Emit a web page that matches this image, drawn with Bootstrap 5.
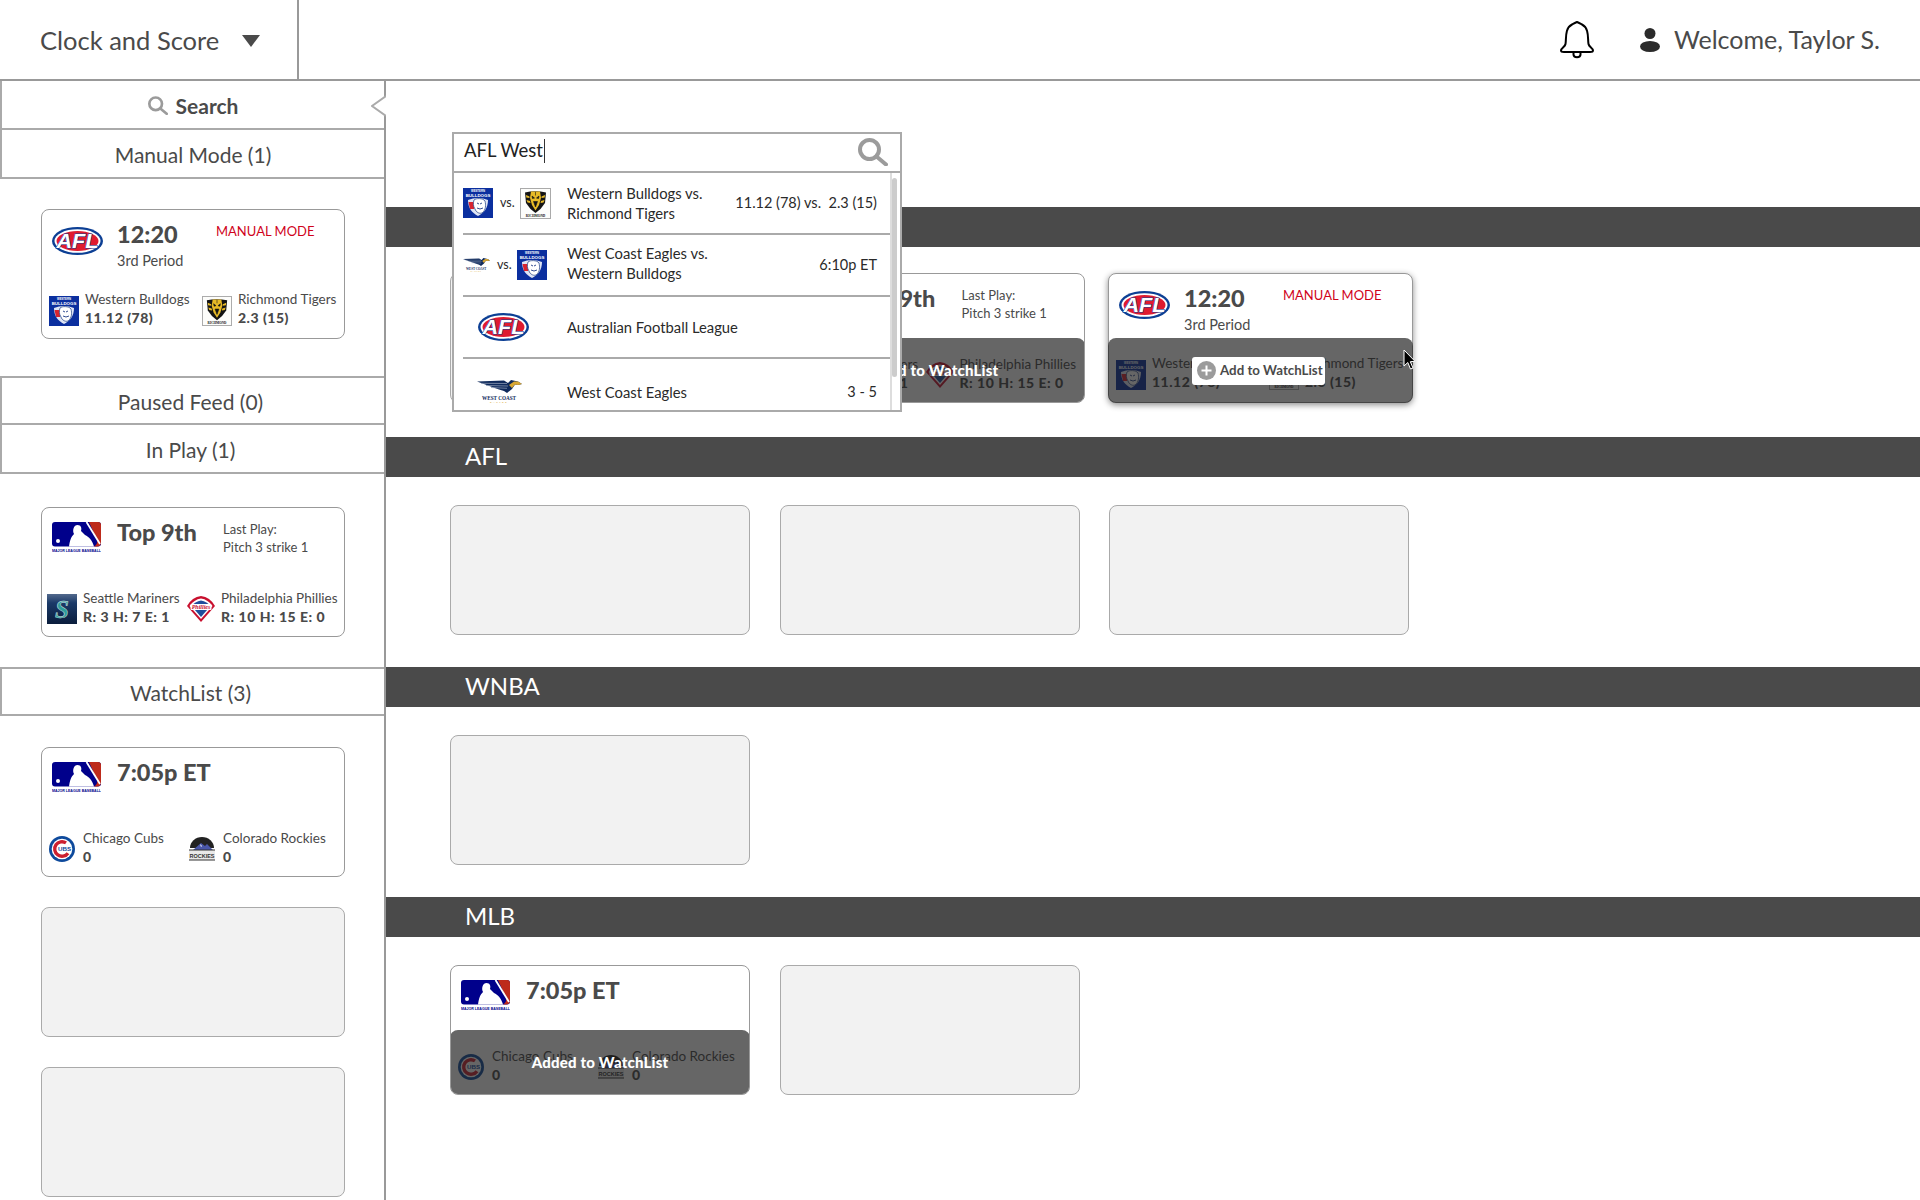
<!DOCTYPE html>
<html lang="en">
<head>
  <meta charset="UTF-8" />
  <meta name="viewport" content="width=device-width, initial-scale=1.0" />
  <title>Clock and Score</title>
  <link href="https://cdn.jsdelivr.net/npm/bootstrap@5.3.0/dist/css/bootstrap.min.css" rel="stylesheet">
  <style>
    body {
      font-family: "Lato", "Noto Sans", sans-serif;
      color: #4a4a4a;
      background: #fff;
      width: 1920px;
      height: 1200px;
      overflow: hidden;
    }
    .sprite { position: absolute; width: 0; height: 0; }

    /* top bar */
    .topbar { height: 81px; border-bottom: 2px solid #999; }
    .mode-picker { width: 299px; border-right: 2px solid #999; padding: 2px 0 0 40px; font-size: 25.5px; }
    .mode-picker .caret { margin-left: 23px; margin-top: 1px; }
    .welcome { font-size: 25px; padding: 1px 40px 0 0; }
    .welcome .bell { margin: 0 45px 3px 0; }
    .welcome .person { margin-right: 14px; }

    /* left column */
    .page { height: 1119px; }
    .sidebar { width: 386px; border-right: 2px solid #999; flex: none; }
    .side-head { height: 49px; border: solid #aaa; border-width: 0 0 2px 2px; font-size: 21px; padding-top: 2px; }
    .side-head.top-line { border-top-width: 2px; }
    .side-head.shifted { padding-right: 5px; }
    .side-group { padding: 30px 0 30px 41px; }
    .group-manual { padding-bottom: 37px; }
    .group-play { padding-top: 33px; }
    .group-watch { padding-top: 31px; display: flex; flex-direction: column; gap: 30px; }
    .collapse-tip { position: absolute; right: -2px; top: 14px; }

    /* game cards */
    .game-card.card { width: 304px; height: 130px; border: 1px solid #999; border-radius: 8px; color: #4a4a4a; overflow: hidden; }
    .game-card.wide { width: 300px; }
    .game-card.over-wide { width: 305px; margin-right: -5px; }
    .game-card.hovered { width: 305px; margin-left: -1px; overflow: visible; box-shadow: 0 2px 6px rgba(0, 0, 0, .45); }
    .game-card.blank { background: #f2f2f2; border-color: #aaa; }
    .card-top { display: flex; padding: 14px 0 0 10px; height: 86px; flex: none; }
    .card-top .league { width: 51px; flex: none; }
    .card-top .league.afl { padding-top: 3px; }
    .clock { width: 99px; margin: -4px 0 0 14px; flex: none; }
    .clock.long { width: 106px; }
    .clock b { display: block; font-size: 23.5px; line-height: 28px; font-weight: 900; white-space: nowrap; }
    .clock span { display: block; font-size: 14.5px; line-height: 20px; margin-top: 3px; }
    .manual { color: #d0021b; font-size: 13px; line-height: 20px; margin-top: -3px; }
    .last-play { font-size: 13px; line-height: 18px; margin-top: -2px; white-space: nowrap; }
    .teams { display: flex; padding-left: 7px; height: 30px; }
    .teams.sea { padding-left: 5px; }
    .team { display: flex; align-items: center; gap: 6px; white-space: nowrap; flex: none; }
    .afl-row .team:first-child { width: 153px; }
    .sea .team:first-child, .chi .team:first-child { width: 140px; }
    .chi .team { gap: 8px; }
    .team div { font-size: 13.5px; line-height: 18px; margin-top: -3px; }
    .afl-row .team div { margin-top: -6px; }
    .team b { display: block; font-weight: 900; font-size: 14px; letter-spacing: .5px; line-height: 19px; }
    .dim {
      position: absolute; left: -1px; right: -1px; bottom: -1px; height: 65px;
      background: rgba(30, 30, 30, .68);
      border-radius: 8px;
      color: #fff; font-size: 15px; font-weight: 900; letter-spacing: .2px;
    }
    .add-btn.btn {
      --bs-btn-padding-x: 5px; --bs-btn-padding-y: 0;
      height: 28px; width: 133px; background: #fff; border: 0; border-radius: 3px;
      color: #4a4a4a; font-size: 13.300px; font-weight: 700; letter-spacing: 0; margin-right: 4px;
    }
    .pointer { position: absolute; right: -4px; top: 75px; }

    /* main column */
    .section-bar { height: 40px; background: #4a4a4a; color: #fff; font-size: 24px; padding: 0 0 3px 79px; }
    .card-row { display: flex; gap: 29.5px; padding: 28px 0 32px 64px; }
    .card-row.first { padding: 26px 0 34px 64px; }
    .board { padding-top: 126px; }

    /* search dropdown */
    .search-pop {
      position: absolute; left: 452px; top: 132px; width: 450px; height: 280px;
      background: #fff; border: 2px solid #aaa; overflow: hidden; z-index: 5;
    }
    .search-box { height: 39px; border-bottom: 2px solid #aaa; padding: 0 12px 3px 10px; color: #222; font-size: 18.5px; }
    .search-box .caret-bar { width: 1px; height: 24px; background: #333; margin-left: 1px; }
    .search-box svg { margin-top: 2px; }
    .search-pop .list-group { --bs-list-group-border-color: #aaa; --bs-list-group-border-width: 2px; margin: 0 8px 0 9px; border-right: 2px solid #ddd; border-radius: 0; }
    .result { height: 62px; display: flex; align-items: center; }
    .result.list-group-item { padding: 0 13px 0 0; background: transparent; color: #2a2a2a; font-size: 14.8px; line-height: 20px; }
    .result.tight-up .names { margin-top: -4px; }
    .result .scoreline { font-size: 14.5px; }
    .result .logos { width: 104px; flex: none; display: flex; align-items: center; }
    .result .logos small { font-size: 12.5px; margin: 0 5px 0 7px; }
    .result .logos.solo { padding-left: 15px; }
    .result.last { padding-top: 3px; }
    .result.last .logos.solo { padding-left: 14px; }
    .scroll-thumb { position: absolute; right: 3px; top: 44px; width: 5px; height: 199px; background: #ccc; border-radius: 3px; }
  </style>
</head>
<body>

  <!-- gradient has to stay in the document, logos get stamped out below -->
  <svg class="sprite" xmlns="http://www.w3.org/2000/svg">
    <defs>
      <linearGradient id="marinersBg" x1="0" y1="0" x2="0" y2="1">
        <stop offset="0" stop-color="#52698c"/>
        <stop offset=".3" stop-color="#1b3a68"/>
        <stop offset="1" stop-color="#0a1d3c"/>
      </linearGradient>
    </defs>
  </svg>

  <template id="logos">
    <svg xmlns="http://www.w3.org/2000/svg">
      <symbol id="logo-afl" viewBox="0 0 51 28">
        <ellipse cx="25.500" cy="14" rx="25.500" ry="14" fill="#0c3f94"/>
        <ellipse cx="25.500" cy="14" rx="23" ry="11.800" fill="#fff"/>
        <ellipse cx="25.500" cy="14" rx="21" ry="10" fill="#df1b2f"/>
        <text x="25.500" y="20.500" text-anchor="middle" font-family="Liberation Sans, sans-serif" font-size="20" font-weight="700" font-style="italic" fill="#fff" stroke="#0c3f94" stroke-width="1" paint-order="stroke" textLength="42" lengthAdjust="spacingAndGlyphs">AFL</text>
      </symbol>
      <symbol id="logo-mlb" viewBox="0 0 49 30">
        <rect width="49" height="24.500" rx="3" fill="#00008b"/>
        <path d="M37 0H46Q49 0 49 3V20Q49 24.500 45 24.500H42Q46 22 45 18Z" fill="#bd2b1b"/>
        <path d="M34.500 0L48 22" stroke="#fff" stroke-width="1.800"/>
        <path d="M17 24.500C18 18 19 15 22 12C20 8 22 3 25.500 3C29 3 30 6 29 9L33 13C37 15 40 18 42 24.500Z" fill="#fff"/>
        <circle cx="6" cy="19" r="2" fill="#fff"/>
        <text x="0" y="29.500" font-family="Liberation Sans, sans-serif" font-size="3.700" font-weight="700" fill="#00008b" textLength="49" lengthAdjust="spacingAndGlyphs">MAJOR LEAGUE BASEBALL</text>
      </symbol>
      <symbol id="logo-bulldogs" viewBox="0 0 30 30">
        <rect width="30" height="30" fill="#0b2f9f"/>
        <text x="15" y="3.800" text-anchor="middle" font-family="Liberation Sans, sans-serif" font-size="2.800" font-weight="700" fill="#fff">WESTERN</text>
        <text x="15" y="8.500" text-anchor="middle" font-family="Liberation Sans, sans-serif" font-size="4.400" font-weight="700" fill="#fff">BULLDOGS</text>
        <path d="M5 12Q15 8 25 12C25 20 21 25 15 28C9 25 5 20 5 12Z" fill="#dfe5f5"/>
        <path d="M5.500 14H11V21H7Z" fill="#d8242f"/>
        <path d="M11 12C13 10 20 10 22 13C23 17 23 22 19 25C16 26 13 24 12 21C10 18 10 15 11 12Z" fill="#fff" stroke="#33508f" stroke-width=".8"/>
        <path d="M14 15l2 1M19 15l-2 1M14 20q3 2 6 0" stroke="#1d3a86" stroke-width=".9" fill="none"/>
      </symbol>
      <symbol id="logo-tigers" viewBox="0 0 31 31">
        <rect x=".5" y=".5" width="30" height="30" fill="#fdfdfb" stroke="#aaa"/>
        <path d="M5 4.500Q15 2 26 4.500L25 15Q21.500 21 15.500 25Q9.500 21 6 15Z" fill="#141414"/>
        <path d="M6 7L9.500 8.500V10L6.300 9.500ZM6.500 12L10 13L10.500 15L7.500 14.500ZM25 7L21.500 8.500V10L24.700 9.500ZM24.500 12L21 13L20.500 15L23.500 14.500Z" fill="#e7ba27"/>
        <path d="M11 3.500H20L21 10L19 17L15.500 22.500L12 17L10 10Z" fill="#e7ba27"/>
        <path d="M12 8L14.500 10L12.500 10.500ZM19 8L16.500 10L18.500 10.500ZM13.500 13.500H17.500L15.500 19ZM15.500 4V7.500" fill="#141414" stroke="#141414" stroke-width=".6"/>
        <text x="15.500" y="28.800" text-anchor="middle" font-family="Liberation Serif, serif" font-size="3.400" font-weight="700" fill="#111">RICHMOND</text>
      </symbol>
      <symbol id="logo-wce" viewBox="0 0 45 23">
        <path d="M0 1.500L27 .5L31 3L34 0L41 1.500L45 4L41 5L38 4.500L35 9L30 13L27 11L22 9.500Z" fill="#0f2a5c"/>
        <path d="M37 1.500L41 1.500L45 4L41 5L38 4.500L35 8L32 5Z" fill="#d9a732"/>
        <path d="M4 3.300L30 3.500M9 5.500L31 6M14 7.500L30 8.300" stroke="#8a98b3" stroke-width=".8"/>
        <text x="22" y="19.500" text-anchor="middle" font-family="Liberation Serif, serif" font-size="5.600" font-weight="700" fill="#0f2a5c" textLength="34" lengthAdjust="spacingAndGlyphs">WEST COAST</text>
        <text x="22" y="22.800" text-anchor="middle" font-family="Liberation Sans, sans-serif" font-size="2.400" fill="#d9a732" letter-spacing="1.400">EAGLES</text>
      </symbol>
      <symbol id="logo-mariners" viewBox="0 0 30 30">
        <rect width="30" height="30" fill="url(#marinersBg)"/>
        <text x="15" y="24" text-anchor="middle" font-family="Liberation Serif, serif" font-size="25" font-weight="700" font-style="italic" fill="#2f9d9b" stroke="#d9e4e4" stroke-width=".5">S</text>
      </symbol>
      <symbol id="logo-phillies" viewBox="0 0 28 26">
        <path d="M14 0Q23 1 28 10L14 26L0 10Q5 1 14 0Z" fill="#c8102e"/>
        <path d="M14 2.500Q21 3.500 25.500 10L14 23L2.500 10Q7 3.500 14 2.500Z" fill="#fff"/>
        <path d="M14 4.500Q20 5.500 23.500 10L14 21L4.500 10Q8 5.500 14 4.500Z" fill="#1f4e9c"/>
        <rect x="3.500" y="8" width="21" height="6" rx="1" fill="#fff"/>
        <text x="14" y="12.800" text-anchor="middle" font-family="Liberation Serif, serif" font-size="6" font-weight="700" font-style="italic" fill="#c8102e">Phillies</text>
      </symbol>
      <symbol id="logo-cubs" viewBox="0 0 26 26">
        <circle cx="13" cy="13" r="13" fill="#0e4a9c"/>
        <circle cx="13" cy="13" r="10.300" fill="#fff"/>
        <circle cx="13" cy="13" r="7.300" fill="none" stroke="#cc2030" stroke-width="3.400" stroke-dasharray="34 12" transform="rotate(35 13 13)"/>
        <text x="15.500" y="15.300" text-anchor="middle" font-family="Liberation Sans, sans-serif" font-size="6.200" font-weight="700" fill="#0e4a9c">UBS</text>
      </symbol>
      <symbol id="logo-rockies" viewBox="0 0 26 25">
        <path d="M1 11A12 11 0 0 1 25 11" fill="#222"/>
        <path d="M4 13L12 6L16 9L18 7L24 13Z" fill="#4a57a8"/>
        <path d="M11 7L13 9L12 10Z" fill="#fff"/>
        <rect x="0" y="13" width="26" height="10" fill="#e9e9e9"/>
        <path d="M0 13H26M0 23H26" stroke="#333" stroke-width="1"/>
        <text x="13" y="20.500" text-anchor="middle" font-family="Liberation Sans, sans-serif" font-size="5.400" font-weight="700" fill="#333" textLength="25" lengthAdjust="spacingAndGlyphs">ROCKIES</text>
      </symbol>
      <symbol id="icon-search" viewBox="0 0 30 28">
        <circle cx="11.500" cy="11.500" r="9.500" fill="none" stroke="#9b9b9b" stroke-width="4"/>
        <path d="M18.500 18.500L28 26.500" stroke="#9b9b9b" stroke-width="4" stroke-linecap="round"/>
      </symbol>
    </svg>
  </template>

  <header class="topbar d-flex">
    <div class="mode-picker d-flex align-items-center">
      <span>Clock and Score</span>
      <svg class="caret" width="18" height="12" viewBox="0 0 18 12"><path d="M0 0H18L9 12Z" fill="#4a4a4a"/></svg>
    </div>
    <div class="welcome ms-auto d-flex align-items-center">
      <svg class="bell" width="36" height="40" viewBox="0 0 36 40">
        <path d="M2 31.500C2 29 6 28 6.500 25C7.500 20 5.500 9 13 5.500C14.500 4.800 15.500 4 18 3C20.500 4 21.500 4.800 23 5.500C30.500 9 28.500 20 29.500 25C30 28 34 29 34 31.500C34 33 32 33 31 33H5C4 33 2 33 2 31.500Z" fill="none" stroke="#000" stroke-width="2" stroke-linejoin="round"/>
        <path d="M14.500 33V35.500C14.500 39 21.500 39 21.500 35.500V33" fill="none" stroke="#000" stroke-width="2"/>
      </svg>
      <svg class="person" width="20" height="24" viewBox="0 0 20 24">
        <circle cx="10" cy="5.500" r="5.500" fill="#2b2b2b"/>
        <ellipse cx="10" cy="18.500" rx="10" ry="5.500" fill="#2b2b2b"/>
      </svg>
      <span>Welcome, Taylor S.</span>
    </div>
  </header>

  <div class="page d-flex">
    <aside class="sidebar position-relative">
      <div class="side-head d-flex align-items-center justify-content-center gap-2 position-relative">
        <svg width="20" height="19"><use href="#icon-search"/></svg>
        <span class="fw-bold">Search</span>
      </div>
      <svg class="collapse-tip" width="15" height="22" viewBox="0 0 15 22"><path d="M15 1L1 11L15 21" fill="#fff" stroke="#aaa" stroke-width="2"/></svg>
      <div class="side-head d-flex align-items-center justify-content-center">Manual Mode (1)</div>

      <div class="side-group group-manual">
        <div class="card game-card">
          <div class="card-top">
            <div class="league afl"><svg width="51" height="28"><use href="#logo-afl"/></svg></div>
            <div class="clock"><b>12:20</b><span>3rd Period</span></div>
            <div class="manual">MANUAL MODE</div>
          </div>
          <div class="teams afl-row">
            <div class="team"><svg width="30" height="30"><use href="#logo-bulldogs"/></svg><div>Western Bulldogs<b>11.12 (78)</b></div></div>
            <div class="team"><svg width="30" height="30"><use href="#logo-tigers"/></svg><div>Richmond Tigers<b>2.3 (15)</b></div></div>
          </div>
        </div>
      </div>

      <div class="side-head shifted top-line d-flex align-items-center justify-content-center">Paused Feed (0)</div>
      <div class="side-head shifted d-flex align-items-center justify-content-center">In Play (1)</div>

      <div class="side-group group-play">
        <div class="card game-card">
          <div class="card-top">
            <div class="league"><svg width="49" height="30"><use href="#logo-mlb"/></svg></div>
            <div class="clock long"><b>Top 9th</b></div>
            <div class="last-play">Last Play:<br>Pitch 3 strike 1</div>
          </div>
          <div class="teams sea">
            <div class="team"><svg width="30" height="30"><use href="#logo-mariners"/></svg><div>Seattle Mariners<b>R: 3 H: 7 E: 1</b></div></div>
            <div class="team"><svg width="28" height="26"><use href="#logo-phillies"/></svg><div>Philadelphia Phillies<b>R: 10 H: 15 E: 0</b></div></div>
          </div>
        </div>
      </div>

      <div class="side-head shifted top-line d-flex align-items-center justify-content-center">WatchList (3)</div>

      <div class="side-group group-watch">
        <div class="card game-card">
          <div class="card-top">
            <div class="league"><svg width="49" height="30"><use href="#logo-mlb"/></svg></div>
            <div class="clock"><b>7:05p ET</b></div>
          </div>
          <div class="teams chi">
            <div class="team"><svg width="26" height="26"><use href="#logo-cubs"/></svg><div>Chicago Cubs<b>0</b></div></div>
            <div class="team"><svg width="26" height="25"><use href="#logo-rockies"/></svg><div>Colorado Rockies<b>0</b></div></div>
          </div>
        </div>
        <div class="card game-card blank"></div>
        <div class="card game-card blank"></div>
      </div>
    </aside>

    <main class="flex-grow-1 board">
      <section>
        <div class="section-bar d-flex align-items-center"></div>
        <div class="card-row first">
          <div class="card game-card wide blank"></div>
          <div class="card game-card over-wide">
            <div class="card-top">
              <div class="league"><svg width="49" height="30"><use href="#logo-mlb"/></svg></div>
              <div class="clock long"><b>Top 9th</b></div>
              <div class="last-play">Last Play:<br>Pitch 3 strike 1</div>
            </div>
            <div class="teams sea">
              <div class="team"><svg width="30" height="30"><use href="#logo-mariners"/></svg><div>Seattle Mariners<b>R: 3 H: 7 E: 1</b></div></div>
              <div class="team"><svg width="28" height="26"><use href="#logo-phillies"/></svg><div>Philadelphia Phillies<b>R: 10 H: 15 E: 0</b></div></div>
            </div>
            <div class="dim d-flex align-items-center justify-content-center pe-1">Added to WatchList</div>
          </div>
          <div class="card game-card hovered">
            <div class="card-top">
              <div class="league afl"><svg width="51" height="28"><use href="#logo-afl"/></svg></div>
              <div class="clock"><b>12:20</b><span>3rd Period</span></div>
              <div class="manual">MANUAL MODE</div>
            </div>
            <div class="teams afl-row">
              <div class="team"><svg width="30" height="30"><use href="#logo-bulldogs"/></svg><div>Western Bulldogs<b>11.12 (78)</b></div></div>
              <div class="team"><svg width="30" height="30"><use href="#logo-tigers"/></svg><div>Richmond Tigers<b>2.3 (15)</b></div></div>
            </div>
            <div class="dim d-flex align-items-center justify-content-center">
              <button class="btn add-btn d-flex align-items-center gap-1 text-nowrap">
                <svg width="19" height="19" viewBox="0 0 19 19" class="flex-shrink-0"><circle cx="9.500" cy="9.500" r="9.500" fill="#9b9b9b"/><path d="M9.500 4.500v10M4.500 9.500h10" stroke="#fff" stroke-width="2"/></svg>
                Add to WatchList
              </button>
            </div>
            <svg class="pointer" width="13" height="21" viewBox="0 0 13 21"><path d="M1 1V17L4.800 13.500L7.500 20L10 19L7.300 12.700L12 12.300Z" fill="#000" stroke="#fff" stroke-width="1"/></svg>
          </div>
        </div>
      </section>

      <section>
        <div class="section-bar d-flex align-items-center">AFL</div>
        <div class="card-row">
          <div class="card game-card wide blank"></div>
          <div class="card game-card wide blank"></div>
          <div class="card game-card wide blank"></div>
        </div>
      </section>

      <section>
        <div class="section-bar d-flex align-items-center">WNBA</div>
        <div class="card-row">
          <div class="card game-card wide blank"></div>
        </div>
      </section>

      <section>
        <div class="section-bar d-flex align-items-center">MLB</div>
        <div class="card-row">
          <div class="card game-card wide">
            <div class="card-top">
              <div class="league"><svg width="49" height="30"><use href="#logo-mlb"/></svg></div>
              <div class="clock"><b>7:05p ET</b></div>
            </div>
            <div class="teams chi">
              <div class="team"><svg width="26" height="26"><use href="#logo-cubs"/></svg><div>Chicago Cubs<b>0</b></div></div>
              <div class="team"><svg width="26" height="25"><use href="#logo-rockies"/></svg><div>Colorado Rockies<b>0</b></div></div>
            </div>
            <div class="dim d-flex align-items-center justify-content-center">Added to WatchList</div>
          </div>
          <div class="card game-card wide blank"></div>
        </div>
      </section>
    </main>
  </div>

  <!-- search dropdown sits over the first row -->
  <div class="search-pop">
    <div class="search-box d-flex align-items-center">
      <span>AFL West</span><span class="caret-bar"></span>
      <svg class="ms-auto" width="30" height="28"><use href="#icon-search"/></svg>
    </div>
    <div class="list-group list-group-flush">
      <div class="list-group-item result">
        <div class="logos"><svg width="30" height="30"><use href="#logo-bulldogs"/></svg><small>vs.</small><svg width="31" height="31"><use href="#logo-tigers"/></svg></div>
        <div class="names">Western Bulldogs vs.<br>Richmond Tigers</div>
        <div class="ms-auto scoreline">11.12 (78) vs.&nbsp; 2.3 (15)</div>
      </div>
      <div class="list-group-item result tight-up">
        <div class="logos"><svg width="27" height="14"><use href="#logo-wce"/></svg><small>vs.</small><svg width="30" height="30"><use href="#logo-bulldogs"/></svg></div>
        <div class="names">West Coast Eagles vs.<br>Western Bulldogs</div>
        <div class="ms-auto scoreline">6:10p ET</div>
      </div>
      <div class="list-group-item result">
        <div class="logos solo"><svg width="51" height="28"><use href="#logo-afl"/></svg></div>
        <div class="names">Australian Football League</div>
      </div>
      <div class="list-group-item result last">
        <div class="logos solo"><svg width="45" height="23"><use href="#logo-wce"/></svg></div>
        <div class="names">West Coast Eagles</div>
        <div class="ms-auto scoreline">3 - 5</div>
      </div>
    </div>
    <div class="scroll-thumb"></div>
  </div>

  <script src="https://cdn.jsdelivr.net/npm/bootstrap@5.3.0/dist/js/bootstrap.bundle.min.js"></script>
  <script>
    // stamp each logo into its own svg so its texts sit where the logo is
    const logos = document.getElementById('logos').content;
    document.querySelectorAll('svg use').forEach(use => {
      const symbol = logos.querySelector(use.getAttribute('href'));
      const svg = use.parentNode;
      svg.setAttribute('viewBox', symbol.getAttribute('viewBox'));
      svg.innerHTML = symbol.innerHTML;
    });
  </script>
</body>
</html>
